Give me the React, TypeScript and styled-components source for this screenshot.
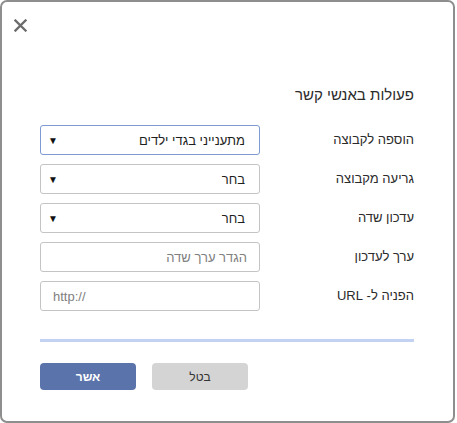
import React from "react";
import styled, { createGlobalStyle } from "styled-components";

const GlobalStyle = createGlobalStyle`
  html, body {
    margin: 0;
    padding: 0;
    background: #ffffff;
  }
  body {
    font-family: "Liberation Sans", Arial, "DejaVu Sans", sans-serif;
  }
`;

interface Row {
  label: string;
  kind: "select" | "input";
  value?: string;
  placeholder?: string;
  ltr?: boolean;
  focused?: boolean;
}

const rows: Row[] = [
  { label: "הוספה לקבוצה", kind: "select", value: "מתענייני בגדי ילדים", focused: true },
  { label: "גריעה מקבוצה", kind: "select", value: "בחר" },
  { label: "עדכון שדה", kind: "select", value: "בחר" },
  { label: "ערך לעדכון", kind: "input", placeholder: "הגדר ערך שדה" },
  { label: "הפניה ל- URL", kind: "input", placeholder: "http://", ltr: true },
];

export default function App() {
  return (
    <>
      <GlobalStyle />
      <Dialog>
        <Header>
          <CloseButton aria-label="close">
            <svg width="13" height="13" viewBox="0 0 13 13">
              <path d="M1.5 1.5 L11.5 11.5 M11.5 1.5 L1.5 11.5" stroke="#6b6b6b" strokeWidth="2.3" strokeLinecap="square" />
            </svg>
          </CloseButton>
        </Header>
        <Body>
          <Title>פעולות באנשי קשר</Title>
          <Form>
            {rows.map((row) => (
              <React.Fragment key={row.label}>
                <Label>{row.label}</Label>
                {row.kind === "select" ? (
                  <SelectBox $focused={row.focused}>
                    <span>{row.value}</span>
                    <Arrow>▼</Arrow>
                  </SelectBox>
                ) : (
                  <TextInput placeholder={row.placeholder} dir={row.ltr ? "ltr" : "rtl"} />
                )}
              </React.Fragment>
            ))}
          </Form>
          <Divider />
          <Actions>
            <Button $primary>אשר</Button>
            <Button>בטל</Button>
          </Actions>
        </Body>
      </Dialog>
    </>
  );
}

const Dialog = styled.div`
  box-sizing: border-box;
  width: 455px;
  height: 423px;
  border: 2px solid #8e8e8e;
  border-radius: 7px;
  background: #fff;
  display: flex;
  flex-direction: column;
`;

const Header = styled.div`
  display: flex;
  padding: 17px 12px 0;
`;

const CloseButton = styled.button`
  display: flex;
  padding: 0;
  border: 0;
  background: none;
  cursor: pointer;
`;

const Body = styled.div`
  display: flex;
  flex-direction: column;
  padding: 0 39px 0 38px;
`;

const Title = styled.div`
  direction: rtl;
  margin-top: 54px;
  font-size: 15px;
  line-height: 18px;
  color: #2b2b2b;
`;

const Form = styled.div`
  direction: rtl;
  margin-top: 21px;
  display: grid;
  grid-template-columns: 1fr 220px;
  grid-auto-rows: 30px;
  row-gap: 9px;
  align-items: center;
`;

const Label = styled.div`
  font-size: 13px;
  color: #2b2b2b;
  margin-bottom: 2px;
`;

const SelectBox = styled.div<{ $focused?: boolean }>`
  box-sizing: border-box;
  height: 30px;
  display: flex;
  align-items: center;
  justify-content: space-between;
  padding: 0 14px 0 7px;
  border: 1px solid ${(p) => (p.$focused ? "#7d9ad3" : "#c4c4c4")};
  border-radius: 3px;
  font-size: 13px;
  color: #1e1e1e;
  background: #fff;
`;

const Arrow = styled.span`
  font-size: 10px;
  color: #111;
`;

const TextInput = styled.input`
  box-sizing: border-box;
  height: 30px;
  width: 100%;
  padding: 0 12px;
  border: 1px solid #c4c4c4;
  border-radius: 3px;
  font-family: inherit;
  font-size: 13px;
  color: #222;
  outline: none;

  &::placeholder {
    color: #808080;
  }
`;

const Divider = styled.div`
  margin-top: 28px;
  height: 3px;
  background: #c3d1f3;
`;

const Actions = styled.div`
  display: flex;
  gap: 16px;
  margin-top: 21px;
`;

const Button = styled.button<{ $primary?: boolean }>`
  width: 96px;
  height: 27px;
  border: 0;
  border-radius: 4px;
  font-family: inherit;
  font-size: 12px;
  font-weight: ${(p) => (p.$primary ? 700 : 400)};
  color: ${(p) => (p.$primary ? "#fff" : "#333")};
  background: ${(p) => (p.$primary ? "#5b73ab" : "#d4d4d4")};
  cursor: pointer;
`;
